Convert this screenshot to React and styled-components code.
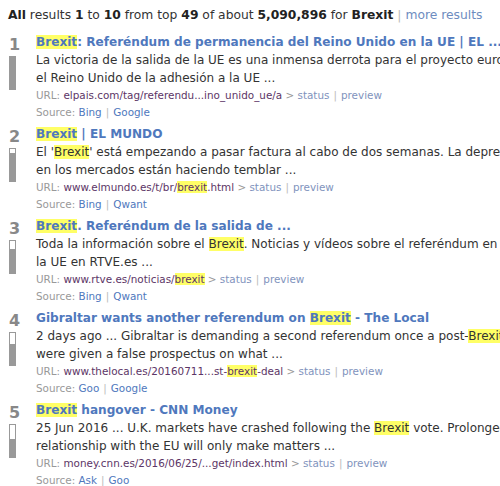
import React from "react";
import styled, { createGlobalStyle } from "styled-components";

const GlobalStyle = createGlobalStyle`
  html, body {
    margin: 0;
    padding: 0;
    background: #fff;
    overflow: hidden;
  }
  body {
    font-family: "DejaVu Sans", Verdana, sans-serif;
    color: #333;
  }
`;

const Page = styled.div`
  width: 640px;
  padding: 6px 8px;
  font-size: 12.3px;
`;

const Summary = styled.div`
  line-height: 18px;
  margin-bottom: 9px;
  color: #333;

  b {
    color: #222;
  }
`;

const Sep = styled.span`
  color: #bbb;
  margin: 0 4px;
`;

const MoreLink = styled.a`
  color: #6d8cc0;
  text-decoration: none;
`;

const ResultList = styled.div`
  display: flex;
  flex-direction: column;
  gap: 4px;
`;

const Row = styled.div`
  display: flex;
`;

const RankCol = styled.div`
  width: 28px;
  flex-shrink: 0;
  display: flex;
  flex-direction: column;
  padding-top: 3px;
`;

const RankNum = styled.div`
  font-size: 16px;
  font-weight: bold;
  color: #888;
  line-height: 18px;
  padding-left: 1px;
`;

const Bar = styled.div`
  width: 5px;
  height: 32px;
  margin-top: 2px;
  margin-left: 1px;
  border: 1px solid #999;
  background: linear-gradient(
    to bottom,
    #fff 0,
    #fff ${(p) => p.empty}px,
    #999 ${(p) => p.empty}px
  );
`;

const Body = styled.div`
  flex: 1;
  min-width: 0;
`;

const Title = styled.a`
  display: block;
  font-size: 12.1px;
  font-weight: bold;
  color: #4f78bd;
  text-decoration: none;
  line-height: 18px;
  white-space: nowrap;
`;

const SnippetLine = styled.div`
  font-size: 12px;
  line-height: 18px;
  color: #333;
  white-space: nowrap;
`;

const Mark = styled.span`
  background: #ffff66;
`;

const Meta = styled.div`
  font-size: 10.4px;
  line-height: 17px;
  color: #999;
  white-space: nowrap;
`;

const UrlText = styled.span`
  color: #5c3566;
`;

const MetaLink = styled.a`
  color: ${(p) => (p.$light ? "#7f93bd" : "#4f78bd")};
  text-decoration: none;
`;

const Pipe = styled.span`
  color: #bbb;
  margin: 0 4px;
`;

const results = [
  {
    rank: 1,
    empty: 0,
    title: [["Brexit"], ": Referéndum de permanencia del Reino Unido en la UE | EL ..."],
    snippet: [
      ["La victoria de la salida de la UE es una inmensa derrota para el proyecto europeo. La salida de"],
      ["el Reino Unido de la adhesión a la UE ..."],
    ],
    url: ["elpais.com/tag/referendu...ino_unido_ue/a"],
    sources: ["Bing", "Google"],
  },
  {
    rank: 2,
    empty: 4,
    title: [["Brexit"], " | EL MUNDO"],
    snippet: [
      ["El '", ["Brexit"], "' está empezando a pasar factura al cabo de dos semanas. La depresión"],
      ["en los mercados están haciendo temblar ..."],
    ],
    url: ["www.elmundo.es/t/br/", ["brexit"], ".html"],
    sources: ["Bing", "Qwant"],
  },
  {
    rank: 3,
    empty: 8,
    title: [["Brexit"], ". Referéndum de la salida de ..."],
    snippet: [
      ["Toda la información sobre el ", ["Brexit"], ". Noticias y vídeos sobre el referéndum en"],
      ["la UE en RTVE.es ..."],
    ],
    url: ["www.rtve.es/noticias/", ["brexit"]],
    sources: ["Bing", "Qwant"],
  },
  {
    rank: 4,
    empty: 11,
    title: ["Gibraltar wants another referendum on ", ["Brexit"], " - The Local"],
    snippet: [
      ["2 days ago ... Gibraltar is demanding a second referendum once a post-", ["Brexit"], " deal"],
      ["were given a false prospectus on what ..."],
    ],
    url: ["www.thelocal.es/20160711...st-", ["brexit"], "-deal"],
    sources: ["Goo", "Google"],
  },
  {
    rank: 5,
    empty: 14,
    title: [["Brexit"], " hangover - CNN Money"],
    snippet: [
      ["25 Jun 2016 ... U.K. markets have crashed following the ", ["Brexit"], " vote. Prolonged uncertainty"],
      ["relationship with the EU will only make matters ..."],
    ],
    url: ["money.cnn.es/2016/06/25/...get/index.html"],
    sources: ["Ask", "Goo"],
  },
];

const renderParts = (parts) =>
  parts.map((p, i) =>
    Array.isArray(p) ? <Mark key={i}>{p[0]}</Mark> : <React.Fragment key={i}>{p}</React.Fragment>
  );

const Result = ({ item }) => (
  <Row>
    <RankCol>
      <RankNum>{item.rank}</RankNum>
      <Bar empty={item.empty} />
    </RankCol>
    <Body>
      <Title href="#">{renderParts(item.title)}</Title>
      {item.snippet.map((line, i) => (
        <SnippetLine key={i}>{renderParts(line)}</SnippetLine>
      ))}
      <Meta>
        URL: <UrlText>{renderParts(item.url)}</UrlText> &gt;{" "}
        <MetaLink $light href="#">status</MetaLink>
        <Pipe>|</Pipe>
        <MetaLink $light href="#">preview</MetaLink>
      </Meta>
      <Meta>
        Source: <MetaLink href="#">{item.sources[0]}</MetaLink>
        <Pipe>|</Pipe>
        <MetaLink href="#">{item.sources[1]}</MetaLink>
      </Meta>
    </Body>
  </Row>
);

const App = () => (
  <>
    <GlobalStyle />
    <Page>
      <Summary>
        <b>All</b> results <b>1</b> to <b>10</b> from top <b>49</b> of about{" "}
        <b>5,090,896</b> for <b>Brexit</b>
        <Sep>|</Sep>
        <MoreLink href="#">more results</MoreLink>
      </Summary>
      <ResultList>
        {results.map((r) => (
          <Result key={r.rank} item={r} />
        ))}
      </ResultList>
    </Page>
  </>
);

export default App;
